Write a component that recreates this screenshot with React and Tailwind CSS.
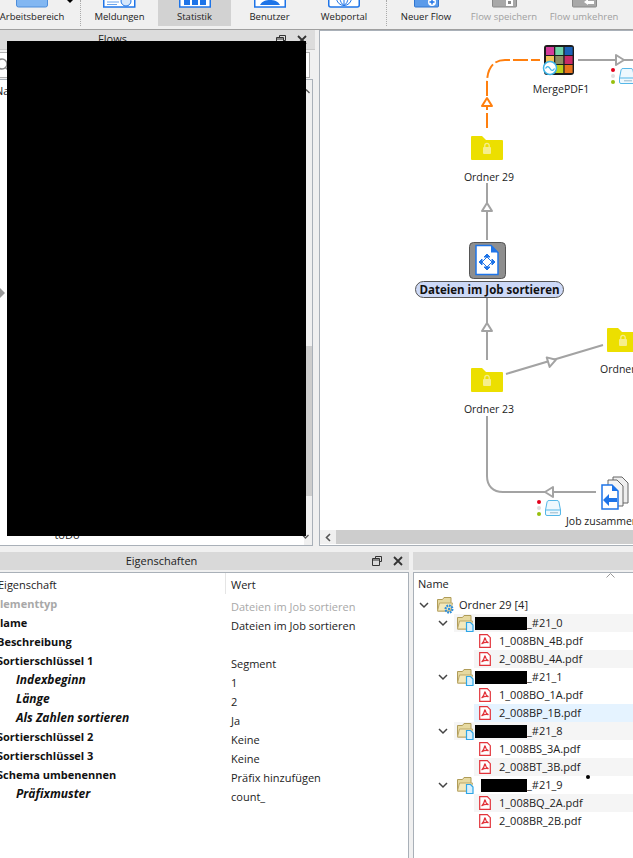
import React from "react";

const props = [
  { label: "lementtyp", gray: true, value: "Dateien im Job sortieren", valueGray: true },
  { label: "lame", value: "Dateien im Job sortieren" },
  { label: "Beschreibung", value: "" },
  { label: "Sortierschlüssel 1", value: "Segment" },
  { label: "Indexbeginn", sub: true, value: "1" },
  { label: "Länge", sub: true, value: "2" },
  { label: "Als Zahlen sortieren", sub: true, value: "Ja" },
  { label: "Sortierschlüssel 2", value: "Keine" },
  { label: "Sortierschlüssel 3", value: "Keine" },
  { label: "Schema umbenennen", value: "Präfix hinzufügen" },
  { label: "Präfixmuster", sub: true, value: "count_" },
];

const tree = [
  { suffix: "_#21_0", shade: true, w: "w-[52px]", files: [
    { name: "1_008BN_4B.pdf" },
    { name: "2_008BU_4A.pdf", bg: "bg-[#f5f5f5]" },
  ] },
  { suffix: "_#21_1", w: "w-[52px]", files: [
    { name: "1_008BO_1A.pdf" },
    { name: "2_008BP_1B.pdf", bg: "bg-[#e5f3ff]" },
  ] },
  { suffix: "_#21_8", shade: true, w: "w-[52px]", files: [
    { name: "1_008BS_3A.pdf" },
    { name: "2_008BT_3B.pdf", bg: "bg-[#f5f5f5]" },
  ] },
  { suffix: "_#21_9", w: "w-[46px]", pad: true, files: [
    { name: "1_008BQ_2A.pdf", bg: "bg-[#f5f5f5]" },
    { name: "2_008BR_2B.pdf" },
  ] },
];

const ToolItem = ({ label, w, active, disabled, children }) => (
  <div className={`flex flex-col items-center h-[26px] ${w} ${active ? "bg-[#d2d2d2]" : ""}`}>
    <div className="h-[9px] overflow-hidden flex items-end">{children}</div>
    <span className={`text-[9.5px] leading-[18px] whitespace-nowrap ${disabled ? "text-[#a0a0a0]" : "text-[#222]"}`}>{label}</span>
  </div>
);

const DockButtons = () => (
  <div className="flex items-center gap-[11px] text-[#333]">
    <svg width="10" height="10" viewBox="0 0 10 10" fill="none" stroke="#333" strokeWidth="1">
      <path d="M3.500 2.500v-2h6v5h-2M.5 2.500h7v7h-7zM.5 4h7" />
    </svg>
    <svg width="10" height="10" viewBox="0 0 10 10" fill="none" stroke="#333" strokeWidth="1.8">
      <path d="M1 1l8 8M9 1l-8 8" />
    </svg>
  </div>
);

const Chevron = () => (
  <svg width="10" height="7" viewBox="0 0 10 7" fill="none" stroke="#444" strokeWidth="1.5" className="shrink-0">
    <path d="M1 1l4 4 4-4" />
  </svg>
);

const PdfIcon = () => (
  <svg width="12" height="14" viewBox="0 0 12 14" className="shrink-0">
    <path d="M.7.7h7.600l3 3v9.600H.7z" fill="#fff" stroke="#e2333a" strokeWidth="1.2" />
    <path d="M6 3.500c-.6 2.600-1.600 5-3.400 6.600M6 3.500c.4 2.600 1.600 4.400 3.600 5.200M2.800 9.600c2-1 4.400-1.400 6.600-.9" fill="none" stroke="#e2333a" strokeWidth="1.2" />
  </svg>
);

const JobFolderIcon = ({ gear }) => (
  <svg width="17" height="18" viewBox="0 0 17 18" className="shrink-0">
    <path d="M.5 15V3.500h5l1.500-2h7v13.500z" fill="#e6d9a0" stroke="#b09c58" />
    <path d="M.5 15l2-8h13l-2 8z" fill="#f3e9bd" stroke="#bda96a" />
    {gear ? (
      <g>
        <circle cx="12" cy="13" r="3.400" fill="none" stroke="#2f8fdc" strokeWidth="2.2" strokeDasharray="1.8 .8" />
        <circle cx="12" cy="13" r="1.2" fill="#2f8fdc" />
      </g>
    ) : (
      <path d="M9.500 8.500h4l2.500 2.500v6.500H9.500z" fill="#d9f0fc" stroke="#2ea6e6" strokeWidth="1.2" />
    )}
  </svg>
);

const Folder = ({ x, y }) => (
  <g transform={`translate(${x} ${y})`}>
    <path d="M0 1a1 1 0 0 1 1-1h10l4 4h16a1 1 0 0 1 1 1v18a1 1 0 0 1-1 1H1a1 1 0 0 1-1-1z" fill="#ecdf00" />
    <rect x="12" y="11" width="8" height="7" rx="1" fill="#f6ee8c" />
    <path d="M13.800 11V9.500a2.200 2.200 0 0 1 4.400 0V11" fill="none" stroke="#f6ee8c" strokeWidth="1.3" />
  </g>
);

const Drive = ({ x, y }) => (
  <g transform={`translate(${x} ${y})`}>
    <circle cx="0" cy="2" r="2" fill="#e3001b" />
    <circle cx="0" cy="8" r="2" fill="#dedede" />
    <circle cx="0" cy="14" r="2" fill="#97bf0d" />
    <path d="M6.500 10l1.600-8.200a2 2 0 0 1 2-1.300h7.800a2 2 0 0 1 2 1.300l1.600 8.200v4a1.500 1.500 0 0 1-1.500 1.500H8a1.500 1.500 0 0 1-1.500-1.500z" fill="#eef8fe" stroke="#55b7e8" />
    <path d="M7 10h14" stroke="#55b7e8" />
    <path d="M11 12.800h8" stroke="#9bb8c8" />
  </g>
);

const Arrow = ({ x, y, angle, color = "#a3a3a3" }) => (
  <path transform={`translate(${x} ${y}) rotate(${angle})`} d="M-4-5L4 0L-4 5Z" fill="#fff" stroke={color} strokeWidth="2" strokeLinejoin="round" />
);

const Canvas = () => (
  <div className="relative flex-1 min-h-0 bg-white overflow-hidden">
    {/* connectors and nodes share the page's coordinates through the viewBox */}
    <svg width="313" height="499" viewBox="320 31 313 499" className="absolute inset-0">
      <g fill="none" strokeWidth="2">
        <path d="M487 128V106M487 96V83C487 70 492 60 505 60H540" stroke="#ff7f0e" strokeDasharray="15 3" />
        <path d="M578 60H633M487 183V240M487 296V360M506 374L603 345M487 416V476C487 486 493 492 503 492H596" stroke="#a3a3a3" />
      </g>
      <Arrow x={487} y={102} angle={-90} color="#ff7f0e" />
      <Arrow x={620} y={60} angle={0} />
      <Arrow x={487} y={207} angle={-90} />
      <Arrow x={487} y={327} angle={-90} />
      <Arrow x={552} y={361} angle={-17} />
      <Arrow x={549} y={492} angle={180} />

      <Folder x={471} y={136} />
      <Folder x={471} y={368} />
      <Folder x={607} y={328} />

      {/* MergePDF1 */}
      <rect x="544" y="45" width="30" height="30" rx="3" fill="#1c1c1c" />
      {[["#d43c9b", "#6fd3a8", "#1c62b8"], ["#f2c35a", "#8d8f62", "#c92a66"], ["#e7a24a", "#b9d01c", "#e8731c"]].map((row, r) =>
        row.map((c, i) => <rect key={c} x={546 + i * 9.3} y={47 + r * 9} width="8" height="8" fill={c} />)
      )}
      <circle cx="550" cy="68" r="6.500" fill="#fff" stroke="#3cb4e8" strokeWidth="1.5" />
      <path d="M545.500 68.500c1.500-2.500 3-2.500 4.500 0s3 2.500 4.500 0" fill="none" stroke="#3cb4e8" strokeWidth="1.3" />
      <Drive x={613} y={68} />

      {/* Dateien im Job sortieren */}
      <rect x="469.500" y="242.500" width="36" height="36" rx="4" fill="#8e8e8e" stroke="#555" />
      <path d="M476 245.500h15l7 7v22h-22z" fill="#fff" stroke="#1e74e8" strokeWidth="1.5" />
      <path d="M491 245.500v7h7z" fill="#1e74e8" />
      <path d="M487 254l3 3h-6zM487 270l3-3h-6zM479 262l3-3v6zM495 262l-3-3v6z" fill="#1e74e8" stroke="#1e74e8" />
      <path d="M487 257l5 5-5 5-5-5z" fill="none" stroke="#1e74e8" />

      {/* Job zusammen */}
      <path d="M613 477h9l6 6v20h-15z" fill="#eee" stroke="#666" />
      <path d="M608 480h9l6 6v20h-15z" fill="#f4f4f4" stroke="#666" />
      <path d="M602 485h10l6 6v18h-16z" fill="#fff" stroke="#1e74e8" strokeWidth="1.5" />
      <path d="M612 485v6h6z" fill="#1e74e8" />
      <path d="M617 498h-8v-4l-6 6 6 6v-4h8z" fill="#1e74e8" />
      <Drive x={539} y={500} />
    </svg>

    <span className="absolute left-[169px] top-[138px] -translate-x-1/2 text-[10.5px] leading-4 whitespace-nowrap text-[#222]">Ordner 29</span>
    <span className="absolute left-[169px] top-[370px] -translate-x-1/2 text-[10.5px] leading-4 whitespace-nowrap text-[#222]">Ordner 23</span>
    <span className="absolute left-[241px] top-[50px] -translate-x-1/2 text-[10.5px] leading-4 whitespace-nowrap text-[#222]">MergePDF1</span>
    <span className="absolute left-[280px] top-[330px] text-[10.5px] leading-4 whitespace-nowrap text-[#222]">Ordner 23</span>
    <span className="absolute left-[246px] top-[482px] text-[10.5px] leading-4 whitespace-nowrap text-[#222]">Job zusammenfassen</span>
    <span className="absolute left-[95px] top-[250px] w-[149px] h-[17px] rounded-full border border-[#555] bg-[#cdd9f7] text-[11.5px] font-bold leading-[15px] text-center whitespace-nowrap text-[#111]">Dateien im Job sortieren</span>
  </div>
);

export default function App() {
  return (
    <div className="relative w-[633px] h-[858px] overflow-hidden flex flex-col bg-[#f0f0f0] font-['Open_Sans',sans-serif] text-[#222]">
      {/* toolbar */}
      <div className="h-[30px] shrink-0 flex items-start border-b border-[#a0a0a0] bg-[#f0f0f0]">
        <ToolItem label="Arbeitsbereich" w="w-[64px]">
          <svg width="32" height="9"><rect x=".5" y="-4" width="31" height="12" rx="2" fill="#82b7f2" stroke="#4c8ddb" /></svg>
        </ToolItem>
        <div className="w-[16px] h-[26px] relative">
          <div className="absolute left-[3px] top-0 w-0 h-0 border-x-[3px] border-x-transparent border-t-[3px] border-t-black" />
        </div>
        <div className="w-px h-[26px] border-l border-dotted border-[#aaa]" />
        <ToolItem label="Meldungen" w="w-[77px]">
          <svg width="33" height="9">
            <rect x=".75" y="-4" width="31" height="12" fill="#fff" stroke="#1e74e8" strokeWidth="1.5" />
            <path d="M4 3h12M4 5.500h10" stroke="#6aa4ee" />
            <circle cx="23" cy="2" r="5" fill="#d6e7fb" stroke="#1e74e8" />
          </svg>
        </ToolItem>
        <ToolItem label="Statistik" w="w-[73px]" active>
          <svg width="32" height="9">
            <rect x=".75" y="-4" width="30.500" height="12" fill="#fff" stroke="#1e74e8" strokeWidth="1.5" />
            <path d="M5 0h6v6H5zM13 0h6v6h-6zM21 0h6v6h-6z" fill="#1e74e8" />
          </svg>
        </ToolItem>
        <ToolItem label="Benutzer" w="w-[77px]">
          <svg width="32" height="9">
            <rect x=".75" y="-4" width="30.500" height="12" fill="#fff" stroke="#1e74e8" strokeWidth="1.5" />
            <path d="M6 6c2-4 6-5 10-5s8 1 10 5z" fill="#1e74e8" />
          </svg>
        </ToolItem>
        <ToolItem label="Webportal" w="w-[72px]">
          <svg width="32" height="9">
            <rect x=".75" y="-4" width="30.500" height="12" rx="2" fill="#fff" stroke="#1e74e8" strokeWidth="1.5" />
            <circle cx="16" cy="-1" r="7.500" fill="none" stroke="#1e74e8" />
            <path d="M16-9V6.500M12-1c0 3 1.500 6 4 7.500 2.500-1.500 4-4.500 4-7.500" fill="none" stroke="#1e74e8" />
          </svg>
        </ToolItem>
        <div className="w-[6px]" />
        <div className="w-px h-[26px] border-l border-dotted border-[#aaa]" />
        <ToolItem label="Neuer Flow" w="w-[78px]">
          <svg width="25" height="9">
            <rect x=".5" y="-4" width="24" height="12" rx="1" fill="#5b9bea" stroke="#2f75d0" />
            <circle cx="18" cy="3" r="4" fill="#fff" />
            <path d="M15.500 3h5M18 .5v5" stroke="#1e74e8" strokeWidth="1.4" />
          </svg>
        </ToolItem>
        <ToolItem label="Flow speichern" w="w-[78px]" disabled>
          <svg width="25" height="9">
            <rect x=".5" y="-4" width="24" height="12" rx="1" fill="#a8a8a8" stroke="#888" />
            <rect x="14" y="-1" width="7" height="8" fill="#fff" />
            <rect x="16" y="2" width="3" height="3" fill="#888" />
          </svg>
        </ToolItem>
        <ToolItem label="Flow umkehren" w="w-[82px]" disabled>
          <svg width="25" height="9">
            <rect x=".5" y="-4" width="24" height="12" rx="1" fill="#a8a8a8" stroke="#888" />
            <path d="M12 3l4-3v2h6v3h-6v1z" fill="#fff" />
          </svg>
        </ToolItem>
      </div>

      {/* upper row */}
      <div className="h-[516px] shrink-0 flex">
        <div className="relative w-[315px] shrink-0 flex flex-col">
          <div className="h-[20px] shrink-0 flex items-center justify-center relative bg-[#dcdcdc] border-b border-[#c8c8c8]">
            <span className="text-[11px] pr-[90px]">Flows</span>
            <div className="absolute right-[8px] top-[5px]"><DockButtons /></div>
          </div>
          <div className="h-[26px] shrink-0 mt-[2px] mr-[5px] flex items-center bg-white border border-l-0 border-[#b0b0b0]">
            <svg width="10" height="14" viewBox="0 0 10 14" fill="none" stroke="#888" strokeWidth="1.5"><circle cx="2" cy="6" r="5" /><path d="M5.500 9.500L9 13" /></svg>
          </div>
          <div className="flex-1 min-h-0 mt-[1px] mr-[2px] flex border border-l-0 border-[#a9b0b8] bg-white">
            <div className="flex-1 flex flex-col justify-between text-[11px] overflow-hidden">
              <span className="pt-[3px] -ml-[5px]">Name</span>
              <span className="text-center leading-[14px] pr-[170px] pb-[3px]">toDo</span>
            </div>
            <div className="relative w-[8px] shrink-0 bg-[#f0f0f0] flex flex-col pt-[266px]">
              <div className="h-[150px] bg-[#cdcdcd]" />
              <svg width="7" height="5" viewBox="0 0 7 5" fill="none" stroke="#555" strokeWidth="1.3" className="absolute left-[-1px] top-[9px]"><path d="M.5 4l3-3 3 3" /></svg>
              <svg width="7" height="5" viewBox="0 0 7 5" fill="none" stroke="#555" strokeWidth="1.3" className="absolute left-[-2px] bottom-[6px]"><path d="M.5 1l3 3 3-3" /></svg>
            </div>
          </div>
          <div className="absolute left-0 top-[258px] w-0 h-0 border-y-[5px] border-y-transparent border-l-[5px] border-l-[#999]" />
        </div>
        <div className="flex-1 ml-[4px] flex flex-col border-l border-t border-b border-[#a9b0b8] bg-white">
          <Canvas />
          <div className="h-[14px] shrink-0 flex bg-[#cdcdcd]">
            <div className="w-[16px] bg-[#f0f0f0] flex items-center justify-center">
              <svg width="6" height="9" viewBox="0 0 6 9" fill="none" stroke="#555" strokeWidth="1.6"><path d="M5 1L1.500 4.500 5 8" /></svg>
            </div>
          </div>
          <div className="h-px shrink-0 bg-white" />
        </div>
      </div>

      {/* lower row */}
      <div className="flex-1 min-h-0 flex gap-[4px] pt-[6px]">
        <div className="w-[409px] shrink-0 flex flex-col">
          <div className="h-[18px] shrink-0 flex items-center justify-center relative bg-[#d9d9d9]">
            <span className="text-[11px] pr-[86px]">Eigenschaften</span>
            <div className="absolute right-[6px] top-[4px]"><DockButtons /></div>
          </div>
          <div className="flex-1 mt-[2px] bg-white border-r border-t border-[#a9b0b8] flex flex-col overflow-hidden">
            <div className="h-[21px] shrink-0 flex items-start text-[11px]">
              <span className="w-[228px] -ml-[2px] shrink-0 border-r border-[#e5e5e5] leading-[24px] h-[21px]">Eigenschaft</span>
              <span className="pl-[5px] leading-[24px]">Wert</span>
            </div>
            <div className="flex">
              <div className="w-[231px] shrink-0 flex flex-col">
                {props.map((p) => (
                  <span key={p.label} className={`h-[19px] leading-[19px] whitespace-nowrap font-bold ${p.label === "lementtyp" || p.label === "lame" ? "" : "-ml-[3px]"} ${p.sub ? "pl-[19px] italic text-[12px]" : "text-[11px]"} ${p.gray ? "text-[#a8a8a8]" : "text-[#111]"}`}>
                    {p.label}
                  </span>
                ))}
              </div>
              <div className="flex flex-col pt-[3px]">
                {props.map((p) => (
                  <span key={p.label} className={`h-[19px] leading-[19px] text-[11px] whitespace-nowrap ${p.valueGray ? "text-[#a8a8a8]" : "text-[#222]"}`}>
                    {p.value}
                  </span>
                ))}
              </div>
            </div>
          </div>
        </div>
        <div className="flex-1 min-w-0 flex flex-col">
          <div className="h-[18px] shrink-0 bg-[#d9d9d9]" />
          <div className="relative flex-1 mt-[2px] bg-white border-l border-t border-[#a9b0b8] flex flex-col overflow-hidden">
            <svg width="9" height="5" viewBox="0 0 9 5" fill="none" stroke="#999" className="absolute right-[18px] top-0"><path d="M.5 4.500L4.500.5l4 4" /></svg>
            <div className="h-[23px] shrink-0 pl-[4px] text-[11px] leading-[22px]">Name</div>
            <div className="h-[18px] shrink-0 flex items-center pl-[5px] text-[11px]">
              <Chevron />
              <span className="ml-[8px]"><JobFolderIcon gear /></span>
              <span className="ml-[5px] whitespace-nowrap">Ordner 29 [4]</span>
            </div>
            {tree.map((job) => (
              <div key={job.suffix} className="flex flex-col">
                <div className="h-[18px] flex items-center pl-[24px] text-[11px]">
                  <Chevron />
                  <div className={`ml-[6px] h-[18px] flex-1 flex items-center ${job.shade ? "bg-[#f5f5f5]" : ""}`}>
                    <span className="ml-[3px] mr-[1px]"><JobFolderIcon /></span>
                    <span className={`${job.w} ${job.pad ? "ml-[6px]" : ""} h-[13px] bg-black shrink-0`} />
                    <span className="whitespace-nowrap">{job.suffix}</span>
                  </div>
                </div>
                {job.files.map((f) => (
                  <div key={f.name} className="h-[18px] flex pl-[60px] text-[11px]">
                    <div className={`flex-1 flex items-center pl-[5px] ${f.bg || ""}`}>
                      <PdfIcon />
                      <span className="ml-[8px] whitespace-nowrap">{f.name}</span>
                    </div>
                  </div>
                ))}
              </div>
            ))}
          </div>
        </div>
      </div>

      {/* redaction over the flows list */}
      <div className="absolute left-[7px] top-[41px] w-[299px] h-[495px] bg-black" />
      <div className="absolute left-[586px] top-[775px] w-[4px] h-[4px] rounded-full bg-black" />
    </div>
  );
}
